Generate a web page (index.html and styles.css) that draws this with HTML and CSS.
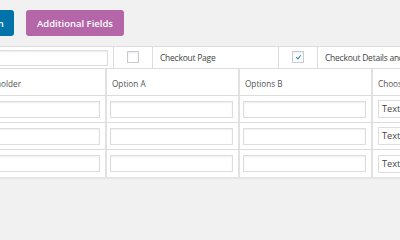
FILE: index.html
```html
<!DOCTYPE html>
<html lang="en">
<head>
    <meta charset="UTF-8">
    <title>Checkout Fields</title>
    <link rel="stylesheet" href="styles.css">
</head>
<body>
<div class="wrap">
    <div class="tabs">
        <button type="button" class="tab tab-blue">Checkout Section</button>
        <button type="button" class="tab tab-purple">Additional Fields</button>
    </div>

    <div class="section-row">
        <div class="cell"><input type="text" class="field"></div>
        <div class="cell center"><span class="check"></span></div>
        <div class="cell">Checkout Page</div>
        <div class="cell center"><span class="check checked"></span></div>
        <div class="cell">Checkout Details and Order Review</div>
    </div>

    <div class="fields">
        <div class="row head">
            <div class="cell first">Placeholder</div>
            <div class="cell">Option A</div>
            <div class="cell">Options B</div>
            <div class="cell">Choose Type</div>
        </div>
        <div class="row">
            <div class="cell"><input type="text" class="field"></div>
            <div class="cell"><input type="text" class="field"></div>
            <div class="cell"><input type="text" class="field"></div>
            <div class="cell"><span class="select">Text Input</span></div>
        </div>
        <div class="row">
            <div class="cell"><input type="text" class="field"></div>
            <div class="cell"><input type="text" class="field"></div>
            <div class="cell"><input type="text" class="field"></div>
            <div class="cell"><span class="select">Text Input</span></div>
        </div>
        <div class="row">
            <div class="cell"><input type="text" class="field"></div>
            <div class="cell"><input type="text" class="field"></div>
            <div class="cell"><input type="text" class="field"></div>
            <div class="cell"><span class="select">Text Input</span></div>
        </div>
    </div>
</div>
</body>
</html>
```

FILE: styles.css
```css
body { margin: 0; background: #f1f1f1; font-family: 'Open Sans', Arial, sans-serif; font-size: 8.2px; color: #555; overflow: hidden; }
.wrap { margin-left: -60px; width: 620px; }
.tabs { display: flex; gap: 12px; padding-top: 10px; margin-left: -26px; }
.tab { height: 26px; border: none; border-radius: 3px; color: #fff; font-family: 'Open Sans', Arial, sans-serif; font-size: 9.5px; font-weight: 600; padding: 0; cursor: pointer; }
.tab-blue { width: 100px; background: #0073aa; }
.tab-purple { width: 98px; background: #b566a9; }

.section-row { display: grid; grid-template-columns: 174px 39px 126px 39px 240px; height: 23px; margin-top: 10px; background: #fff; border-top: 1px solid #dcdcdc; border-bottom: 1px solid #dcdcdc; box-sizing: border-box; font-size: 8.5px; letter-spacing: -0.25px; color: #444; }
.section-row .cell { border-right: 1px solid #dcdcdc; display: flex; align-items: center; padding-left: 7px; }
.section-row .cell:first-child { padding: 0 5px 0 0; justify-content: flex-end; }
.section-row .cell.center { justify-content: center; padding: 0; }
.section-row .field { width: 120px; height: 16px; }

.check { width: 10px; height: 10px; border: 1px solid #c9cdd1; background: #fff; box-shadow: inset 0 1px 2px rgba(0,0,0,.08); position: relative; margin-top: -2px; }
.check.checked::after { content: ""; position: absolute; left: 4px; top: 2px; width: 2px; height: 4px; border: solid #1e8cbe; border-width: 0 1.5px 1.5px 0; transform: rotate(40deg); }

.fields { background: #fff; border-bottom: 2px solid #e5e5e5; }
.row { display: grid; grid-template-columns: 167px 133px 133px 188px; height: 27px; border-bottom: 1px solid #dcdcdc; box-sizing: border-box; }
.row .cell { border-right: 2px solid #e1e1e1; display: flex; align-items: center; padding: 0 5px 0 3px; }
.row.head .cell { padding-left: 5px; padding-top: 2px; }
.row.head .cell.first { padding-left: 36px; }
.row:last-child { border-bottom: none; }

.field { box-sizing: border-box; width: 100%; height: 17px; border: 1px solid #ddd; box-shadow: inset 0 1px 2px rgba(0,0,0,.07); background: #fff; margin: 0; padding: 0 3px; }
.select { display: inline-block; box-sizing: border-box; height: 18px; line-height: 16px; border: 1px solid #ddd; padding: 0 3px; font-size: 9.2px; color: #444; margin-left: 2px; width: 110px; }
```
